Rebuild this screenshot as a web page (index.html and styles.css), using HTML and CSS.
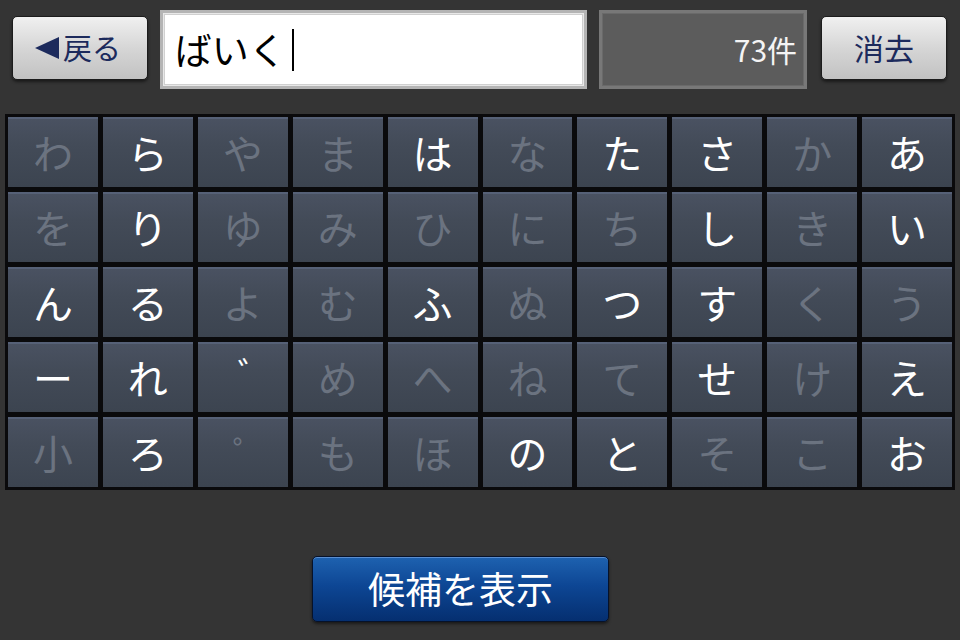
FILE: index.html
```html
<!DOCTYPE html>
<html lang="ja">
<head>
    <meta charset="UTF-8">
    <meta name="viewport" content="width=device-width, initial-scale=1.0">
    <title>かな入力</title>
    <link rel="stylesheet" href="styles.css">
</head>
<body>
    <div class="screen">
        <div class="top-bar">
            <button class="silver-btn back-btn">
                <svg class="arrow" width="24" height="22" viewBox="0 0 24 22"><polygon points="24,0 24,22 0,11" fill="#1c2a5c"/></svg>戻る
            </button>
            <div class="search-field">ばいく<span class="caret"></span></div>
            <div class="count-box">73件</div>
            <button class="silver-btn clear-btn">消去</button>
        </div>

        <div class="kana-grid">
            <div class="key off">わ</div><div class="key">ら</div><div class="key off">や</div><div class="key off">ま</div><div class="key">は</div>
            <div class="key off">な</div><div class="key">た</div><div class="key">さ</div><div class="key off">か</div><div class="key">あ</div>

            <div class="key off">を</div><div class="key">り</div><div class="key off">ゆ</div><div class="key off">み</div><div class="key off">ひ</div>
            <div class="key off">に</div><div class="key off">ち</div><div class="key">し</div><div class="key off">き</div><div class="key">い</div>

            <div class="key">ん</div><div class="key">る</div><div class="key off">よ</div><div class="key off">む</div><div class="key">ふ</div>
            <div class="key off">ぬ</div><div class="key">つ</div><div class="key">す</div><div class="key off">く</div><div class="key off">う</div>

            <div class="key">ー</div><div class="key">れ</div><div class="key mark">゛</div><div class="key off">め</div><div class="key off">へ</div>
            <div class="key off">ね</div><div class="key off">て</div><div class="key">せ</div><div class="key off">け</div><div class="key">え</div>

            <div class="key off">小</div><div class="key">ろ</div><div class="key off mark small">゜</div><div class="key off">も</div><div class="key off">ほ</div>
            <div class="key">の</div><div class="key">と</div><div class="key off">そ</div><div class="key off">こ</div><div class="key">お</div>
        </div>

        <div class="bottom-bar">
            <button class="show-btn">候補を表示</button>
        </div>
    </div>
</body>
</html>
```

FILE: styles.css
```css
/* Kana keyboard screen */
body {
    margin: 0;
    background-color: #343434;
    font-family: "Noto Sans CJK JP", "Noto Sans", sans-serif;
    color: #ffffff;
}

.screen {
    width: 960px;
    height: 640px;
    display: flex;
    flex-direction: column;
}

.top-bar {
    display: flex;
    align-items: flex-start;
    padding: 10px 13px 0 12px;
}

.silver-btn {
    height: 64px;
    margin-top: 6px;
    border: 1px solid #1c1c1c;
    border-radius: 5px;
    background: linear-gradient(#f0f0f0, #d6d6d6 50%, #c2c2c2);
    box-shadow: 0 2px 3px rgba(0, 0, 0, 0.5);
    color: #1c2a5c;
    font-family: inherit;
    font-size: 29px;
    padding: 0 0 2px;
    display: flex;
    align-items: center;
    justify-content: center;
    line-height: 1;
}

.back-btn {
    width: 136px;
    padding-right: 4px;
}

.back-btn .arrow {
    margin-right: 4px;
    margin-top: 2px;
}

.clear-btn {
    width: 126px;
    margin-left: 14px;
    font-size: 30px;
}

.search-field {
    width: 428px;
    height: 79px;
    margin-left: 12px;
    box-sizing: border-box;
    border: 3px solid #b4b4b4;
    box-shadow: inset 0 0 0 1px #e8e8e8, inset 0 0 0 2px #d0d0d0;
    background-color: #ffffff;
    color: #000000;
    font-size: 37px;
    display: flex;
    align-items: center;
    padding-left: 12px;
    line-height: 1;
}

.caret {
    display: inline-block;
    width: 2px;
    height: 42px;
    background-color: #000000;
    margin-left: 6px;
}

.count-box {
    width: 208px;
    height: 79px;
    margin-left: 12px;
    box-sizing: border-box;
    border: 3px solid #787878;
    box-shadow: inset 0 0 0 1px #6a6a6a;
    background-color: #5c5c5c;
    color: #f4f4f4;
    font-size: 30px;
    display: flex;
    align-items: center;
    justify-content: flex-end;
    padding-right: 7px;
    padding-bottom: 2px;
}

.kana-grid {
    margin: 25px 0 0 5px;
    width: 950px;
    height: 376px;
    box-sizing: border-box;
    padding: 3px;
    background-color: #0a0a0c;
    display: grid;
    grid-template-columns: repeat(10, 1fr);
    grid-template-rows: repeat(5, 1fr);
    gap: 5px 5px;
}

.key {
    background: linear-gradient(#4a5262, #434b58 40%, #3c4450);
    box-shadow: inset 0 2px 0 rgba(110, 125, 160, 0.35);
    display: flex;
    align-items: center;
    justify-content: center;
    font-size: 40px;
    color: #ffffff;
    line-height: 1;
}

.key.off {
    color: #6b7380;
}

.key.mark {
    align-items: flex-start;
    padding: 14px 0 0 24px;
    font-size: 34px;
}

.key.mark.small {
    padding: 18px 0 0 14px;
}

.bottom-bar {
    display: flex;
    margin-top: 66px;
    padding-left: 312px;
}

.show-btn {
    width: 297px;
    height: 66px;
    border: 1px solid #06122a;
    border-radius: 5px;
    background: linear-gradient(#1e62b0, #0d4694 45%, #052f70);
    box-shadow: inset 0 1px 0 #5a8ed0, 0 2px 3px rgba(0, 0, 0, 0.5);
    color: #ffffff;
    font-family: inherit;
    font-size: 37px;
    padding: 0 0 2px;
    line-height: 1;
}
```
